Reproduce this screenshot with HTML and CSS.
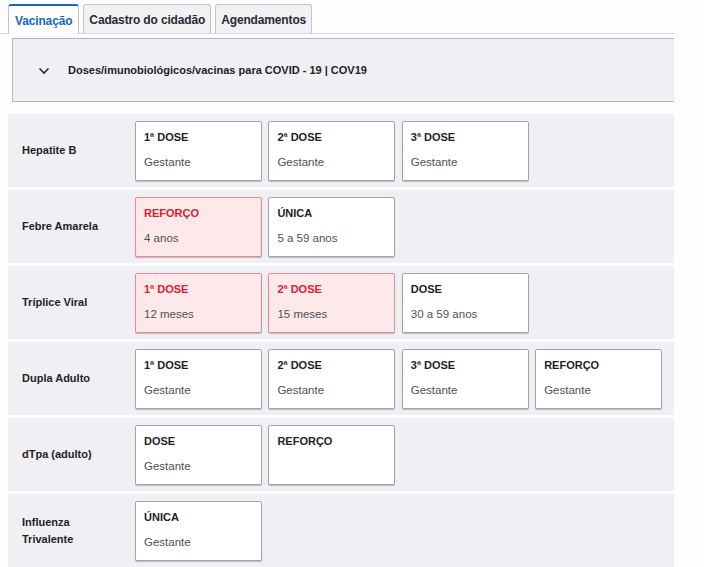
FILE: index.html
```html
<!DOCTYPE html>
<html lang="pt-BR">
<head>
<meta charset="utf-8">
<link rel="stylesheet" href="styles.css">
</head>
<body>
<div class="page">
  <nav class="tabs">
    <div class="tab active">Vacinação</div>
    <div class="tab">Cadastro do cidadão</div>
    <div class="tab">Agendamentos</div>
  </nav>

  <div class="accordion">
    <svg class="chev" width="12" height="8" viewBox="0 0 12 8"><path d="M1.5 1.5 L6 6 L10.5 1.5" fill="none" stroke="#2b2b33" stroke-width="1.6"/></svg>
    <span class="acc-title">Doses/imunobiológicos/vacinas para COVID - 19 | COV19</span>
  </div>

  <div class="rows">
    <div class="row">
      <div class="label">Hepatite B</div>
      <div class="cards">
        <div class="card"><div class="ct">1ª DOSE</div><div class="cs">Gestante</div></div>
        <div class="card"><div class="ct">2ª DOSE</div><div class="cs">Gestante</div></div>
        <div class="card"><div class="ct">3ª DOSE</div><div class="cs">Gestante</div></div>
      </div>
    </div>
    <div class="row">
      <div class="label">Febre Amarela</div>
      <div class="cards">
        <div class="card late"><div class="ct">REFORÇO</div><div class="cs">4 anos</div></div>
        <div class="card"><div class="ct">ÚNICA</div><div class="cs">5 a 59 anos</div></div>
      </div>
    </div>
    <div class="row">
      <div class="label">Tríplice Viral</div>
      <div class="cards">
        <div class="card late"><div class="ct">1ª DOSE</div><div class="cs">12 meses</div></div>
        <div class="card late"><div class="ct">2ª DOSE</div><div class="cs">15 meses</div></div>
        <div class="card"><div class="ct">DOSE</div><div class="cs">30 a 59 anos</div></div>
      </div>
    </div>
    <div class="row">
      <div class="label">Dupla Adulto</div>
      <div class="cards">
        <div class="card"><div class="ct">1ª DOSE</div><div class="cs">Gestante</div></div>
        <div class="card"><div class="ct">2ª DOSE</div><div class="cs">Gestante</div></div>
        <div class="card"><div class="ct">3ª DOSE</div><div class="cs">Gestante</div></div>
        <div class="card"><div class="ct">REFORÇO</div><div class="cs">Gestante</div></div>
      </div>
    </div>
    <div class="row">
      <div class="label">dTpa (adulto)</div>
      <div class="cards">
        <div class="card"><div class="ct">DOSE</div><div class="cs">Gestante</div></div>
        <div class="card"><div class="ct">REFORÇO</div><div class="cs"></div></div>
      </div>
    </div>
    <div class="row">
      <div class="label">Influenza<br>Trivalente</div>
      <div class="cards">
        <div class="card"><div class="ct">ÚNICA</div><div class="cs">Gestante</div></div>
      </div>
    </div>
  </div>
</div>
</body>
</html>
```

FILE: styles.css
```css
* { box-sizing: border-box; }
html, body { margin: 0; padding: 0; }
body {
  background: #fdfdfd;
  font-family: "Liberation Sans", Arial, sans-serif;
  color: #1f1f24;
  width: 704px;
  height: 567px;
  overflow: hidden;
}
.page {
  width: 674px;
}
.tabs {
  display: flex;
  gap: 4px;
  padding: 4px 0 0 8px;
  height: 34px;
  border-bottom: 1px solid #d6d6da;
}
.tab {
  height: 29px;
  padding: 1px 5px 0;
  display: flex;
  align-items: center;
  font-size: 12px;
  font-weight: bold;
  letter-spacing: -0.15px;
  color: #2a2a30;
  background: #f1f1f4;
  border: 1px solid #c4c4ca;
  border-bottom: none;
  border-radius: 3px 3px 0 0;
}
.tab.active {
  background: #fff;
  color: #1467c4;
  border-top: 2px solid #1467c4;
  padding-left: 6px;
  padding-right: 6px;
  height: 30px;
  margin-bottom: -1px;
}
.accordion {
  margin: 4px 0 0 12px;
  height: 64px;
  background: #efeff4;
  border: 1px solid #b4b4ba;
  border-right: none;
  display: flex;
  align-items: center;
  padding-left: 25px;
}
.chev { margin-right: 18px; margin-top: 1px; }
.acc-title {
  font-size: 11px;
  font-weight: bold;
  color: #1f1f24;
}
.rows {
  margin: 12px 0 0 8px;
  display: flex;
  flex-direction: column;
  gap: 3px;
}
.row {
  height: 73px;
  background: #efeff4;
  display: flex;
}
.label {
  width: 127px;
  padding-left: 14px;
  display: flex;
  align-items: center;
  font-size: 11px;
  font-weight: bold;
  line-height: 17px;
  color: #1f1f24;
}
.cards {
  display: flex;
  gap: 6.4px;
  padding-top: 7px;
}
.card {
  width: 127px;
  height: 60px;
  background: #fff;
  border: 1px solid #a3a3ab;
  border-radius: 2px;
  box-shadow: 0 1px 1px rgba(0,0,0,0.22);
  padding: 9px 0 0 8px;
}
.ct {
  font-size: 11px;
  font-weight: bold;
  color: #1f1f24;
  line-height: 13px;
}
.cs {
  margin-top: 11px;
  font-size: 11.5px;
  color: #505058;
  line-height: 14px;
}
.card.late {
  background: #fde8ea;
  border-color: #e88a92;
}
.card.late .ct { color: #d21f33; }
```
